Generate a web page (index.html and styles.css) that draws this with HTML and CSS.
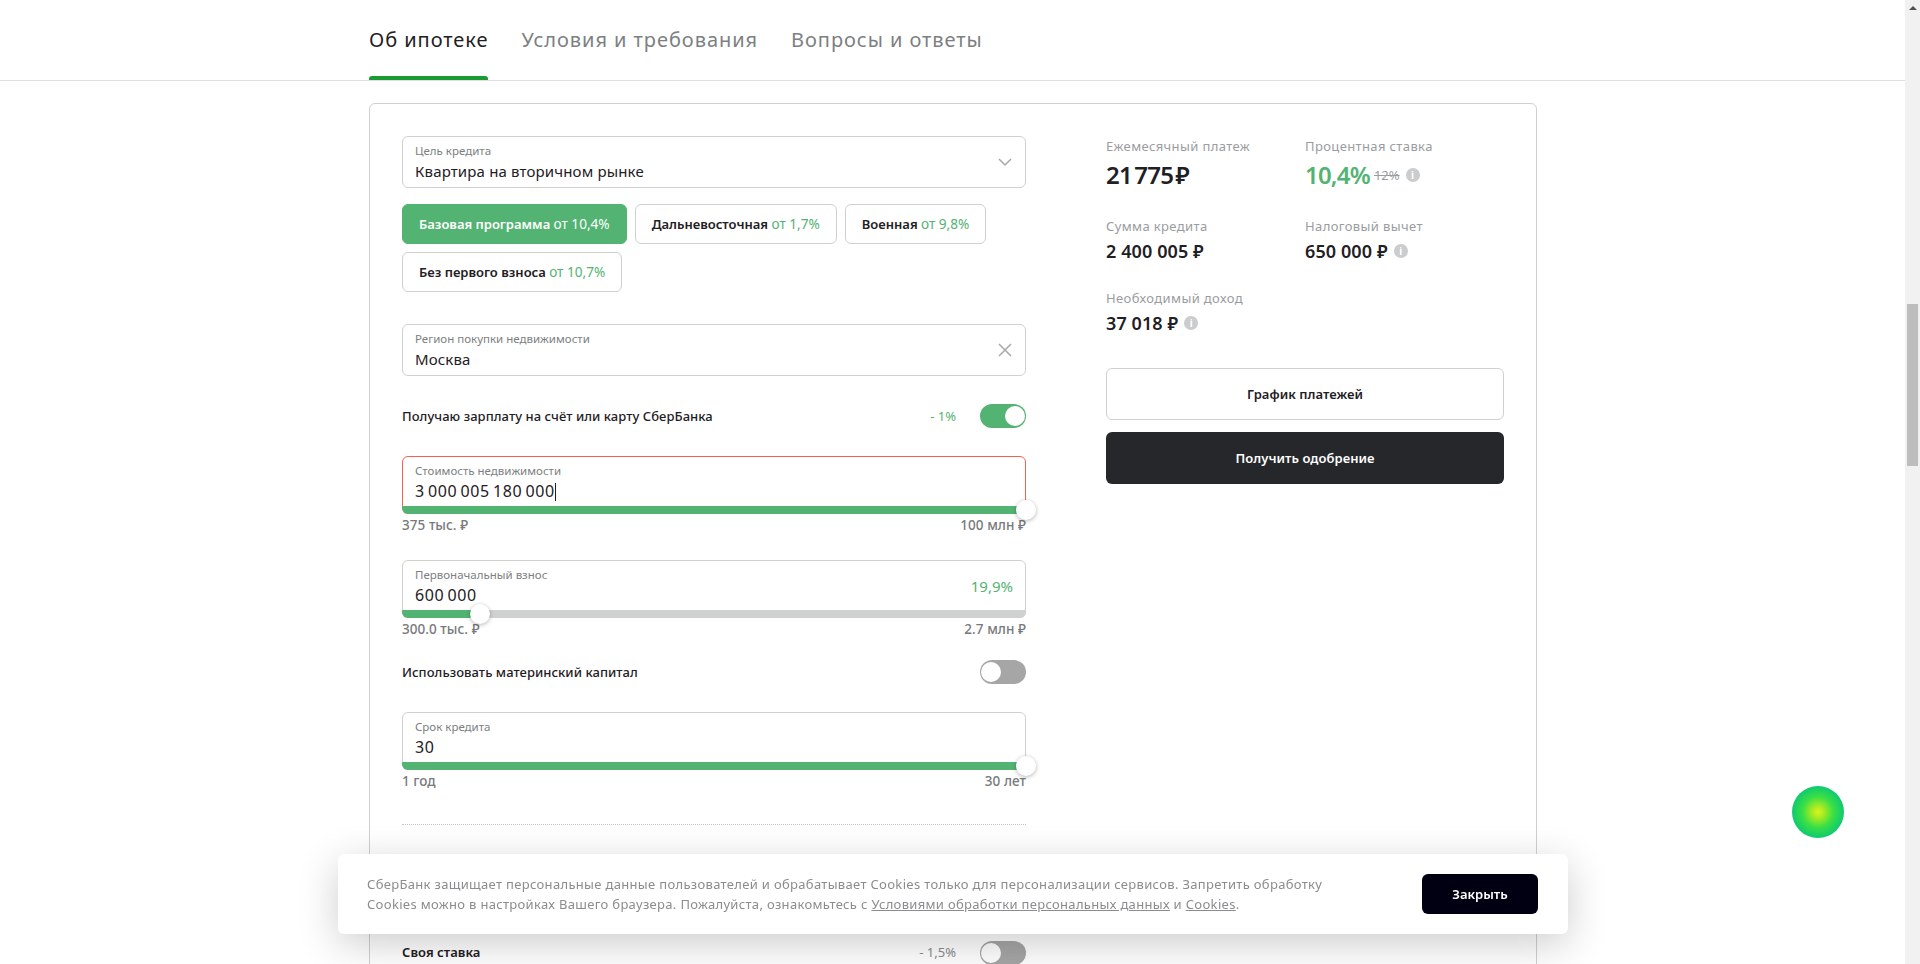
FILE: index.html
```html
<!DOCTYPE html>
<html lang="ru">
<head>
<meta charset="utf-8">
<title>Ипотека</title>
<link rel="stylesheet" href="styles.css">
</head>
<body>
<div class="viewport">
  <main class="page">
    <nav class="tabs">
      <a class="tab active">Об ипотеке</a>
      <a class="tab">Условия и требования</a>
      <a class="tab">Вопросы и ответы</a>
    </nav>
    <section class="card">
      <div class="form">
        <div class="field plain">
          <div class="f-label">Цель кредита</div>
          <div class="f-value">Квартира на вторичном рынке</div>
          <svg class="f-icon" viewBox="0 0 14 14"><path d="M1 4l6 6 6-6" fill="none" stroke="#a8a8a8" stroke-width="1.5"/></svg>
        </div>
        <div class="chips">
          <button class="chip on">Базовая программа <span>от 10,4%</span></button>
          <button class="chip">Дальневосточная <span>от 1,7%</span></button>
          <button class="chip">Военная <span>от 9,8%</span></button>
          <button class="chip">Без первого взноса <span>от 10,7%</span></button>
        </div>
        <div class="field plain region">
          <div class="f-label">Регион покупки недвижимости</div>
          <div class="f-value">Москва</div>
          <svg class="f-icon" viewBox="0 0 14 14"><path d="M1 1l12 12M13 1L1 13" fill="none" stroke="#a8a8a8" stroke-width="1.5"/></svg>
        </div>
        <div class="switch-row first">
          <span class="sw-label">Получаю зарплату на счёт или карту СберБанка</span>
          <span class="sw-note">- 1%</span>
          <span class="toggle on"></span>
        </div>
        <div class="field slider error">
          <div class="f-label">Стоимость недвижимости</div>
          <div class="f-value num">3 000 005 180 000<i class="caret"></i></div>
          <div class="track"><div class="fill full"></div><span class="knob end"></span></div>
        </div>
        <div class="range"><span>375 тыс. ₽</span><span>100 млн ₽</span></div>
        <div class="field slider down">
          <div class="f-label">Первоначальный взнос</div>
          <div class="f-value num">600 000</div>
          <div class="f-percent">19,9%</div>
          <div class="track"><div class="fill part"></div><span class="knob mid"></span></div>
        </div>
        <div class="range"><span>300.0 тыс. ₽</span><span>2.7 млн ₽</span></div>
        <div class="switch-row second">
          <span class="sw-label">Использовать материнский капитал</span>
          <span class="toggle"></span>
        </div>
        <div class="field slider term">
          <div class="f-label">Срок кредита</div>
          <div class="f-value num">30</div>
          <div class="track"><div class="fill full"></div><span class="knob end"></span></div>
        </div>
        <div class="range"><span>1 год</span><span>30 лет</span></div>
        <div class="divider"></div>
        <div class="switch-row own">
          <span class="sw-label strong">Своя ставка</span>
          <span class="sw-note muted">- 1,5%</span>
          <span class="toggle"></span>
        </div>
      </div>
      <aside class="summary">
        <div class="stats">
          <div class="stat s1">
            <div class="s-label">Ежемесячный платеж</div>
            <div class="s-value big">21 775 ₽</div>
          </div>
          <div class="stat s1">
            <div class="s-label">Процентная ставка</div>
            <div class="s-value big green">10,4%<s class="old">12%</s><i class="info">i</i></div>
          </div>
          <div class="stat s2">
            <div class="s-label">Сумма кредита</div>
            <div class="s-value">2 400 005 ₽</div>
          </div>
          <div class="stat s2">
            <div class="s-label">Налоговый вычет</div>
            <div class="s-value">650 000 ₽<i class="info">i</i></div>
          </div>
          <div class="stat s3">
            <div class="s-label">Необходимый доход</div>
            <div class="s-value">37 018 ₽<i class="info">i</i></div>
          </div>
        </div>
        <button class="btn outline">График платежей</button>
        <button class="btn dark">Получить одобрение</button>
      </aside>
    </section>
  </main>
  <div class="scrollbar">
    <svg class="sb-arrow" viewBox="0 0 8 4"><path d="M4 0l4 4H0z" fill="#505050"/></svg>
    <div class="sb-thumb"></div>
  </div>
</div>
<div class="assistant"></div>
<div class="cookie">
  <p class="cookie-text">СберБанк защищает персональные данные пользователей и обрабатывает Cookies только для персонализации сервисов. Запретить обработку<br>Cookies можно в настройках Вашего браузера. Пожалуйста, ознакомьтесь с <a>Условиями обработки персональных данных</a> и <a>Cookies</a>.</p>
  <button class="cookie-btn">Закрыть</button>
</div>
</body>
</html>
```
FILE: styles.css
```css
* { box-sizing: border-box; }
html, body { margin: 0; height: 964px; overflow: hidden; }
body { font-family: "Noto Sans", "Open Sans", sans-serif; color: #1f2024; background: #fff; }
button { font-family: inherit; cursor: pointer; }

.viewport { display: flex; height: 964px; }
.page { width: 1905px; flex: none; overflow: hidden; }

.tabs { height: 81px; border-bottom: 1px solid #e0e0e0; padding-left: 369px; display: flex; gap: 33px; }
.tab { height: 80px; line-height: 79px; font-size: 20px; letter-spacing: .95px; color: #7d7f82; position: relative; }
.tab.active { color: #1f2024; }
.tab.active::after { content: ""; position: absolute; left: 0; right: 0; bottom: 0; height: 4px; background: #1a9a32; border-radius: 3px 3px 0 0; }

.card { width: 1168px; margin: 22px 0 0 369px; border: 1px solid #d0d0d0; border-radius: 6px; padding: 32px; display: flex; gap: 80px; height: 1000px; }
.form { width: 624px; flex: none; }
.summary { width: 398px; flex: none; }

.field { position: relative; border: 1px solid #d0d0d0; border-radius: 6px; padding: 6px 12px 0; }
.field.plain { height: 52px; }
.field.slider { height: 58px; }
.field.error { border-color: #f4624f; }
.f-label { font-size: 11.5px; line-height: 15px; color: #7d7f82; }
.f-value { font-size: 15px; line-height: 22px; margin-top: 2px; letter-spacing: .15px; color: #1f2024; }
.f-value.num { font-size: 16px; letter-spacing: .6px; word-spacing: -1.5px; }
.f-icon { position: absolute; right: 13px; top: 18px; width: 14px; height: 14px; }
.f-percent { position: absolute; right: 12px; top: 14px; font-size: 15px; line-height: 22px; color: #52b372; }
.caret { display: inline-block; width: 1px; height: 18px; background: #1f2024; vertical-align: -4px; }

.chips { display: flex; flex-wrap: wrap; gap: 8px; margin-top: 16px; }
.chip { height: 40px; padding: 0 16px 2px 16px; background: #fff; border: 1px solid #d0d0d0; border-radius: 6px; font-size: 13px; font-weight: 600; color: #1f2024; white-space: nowrap; }
.chip span { font-weight: 400; font-size: 13.6px; color: #52b372; }
.chip.on { background: #52b372; border-color: #52b372; color: #fff; }
.chip.on span { color: #fff; }

.region { margin-top: 32px; }

.switch-row { display: flex; align-items: center; height: 24px; font-size: 13px; }
.switch-row.first { margin-top: 28px; }
.switch-row.second { margin-top: 22px; }
.switch-row.own { margin-top: 116px; }
.sw-label { flex: 1; font-weight: 500; letter-spacing: .05px; }
.sw-label.strong { font-weight: 600; padding-bottom: 3px; }
.sw-note { margin-right: 24px; padding-bottom: 1px; color: #52b372; }
.sw-note.muted { color: #8a8c8f; padding-bottom: 3px; }
.toggle { width: 46px; height: 24px; flex: none; border-radius: 12px; background: #a6a6a6; position: relative; }
.toggle.on { background: #52b372; }
.toggle::after { content: ""; position: absolute; top: 2px; left: 1px; width: 20px; height: 20px; border-radius: 50%; background: #fff; }
.toggle.on::after { left: auto; right: 1px; }

.switch-row.first + .field { margin-top: 28px; }
.field.down { margin-top: 26px; }
.field.term { margin-top: 28px; }

.track { position: absolute; left: -1px; right: -1px; bottom: -1px; height: 8px; background: #d0d2d1; border-radius: 0 0 6px 6px; }
.fill { height: 8px; background: #52b372; border-radius: 0 0 0 6px; }
.fill.full { width: 100%; border-radius: 0 0 6px 6px; }
.fill.part { width: 78px; }
.knob { position: absolute; top: -6px; width: 20px; height: 20px; border-radius: 50%; background: #fff; box-shadow: 0 1px 4px rgba(0,0,0,.3); }
.knob.end { right: -10px; }
.knob.mid { left: 68px; }

.range { display: flex; justify-content: space-between; margin-top: 2px; font-size: 13.5px; line-height: 18px; font-weight: 500; letter-spacing: .05px; color: #77797c; }

.divider { margin-top: 34px; border-top: 1px dotted #c4c4c4; }

.stats { display: grid; grid-template-columns: 199px 199px; }
.stat { height: 72px; }
.stat.s1 { height: 80px; }
.stat.s3 { height: 64px; }
.s-label { font-size: 13px; line-height: 18px; letter-spacing: .38px; color: #9a9c9f; margin-top: 1px; }
.s-value { font-size: 18px; line-height: 24px; font-weight: 600; display: flex; align-items: center; margin-top: 4px; white-space: pre; letter-spacing: .1px; }
.s-value.big { font-size: 24px; line-height: 32px; margin-top: 4px; word-spacing: -3px; letter-spacing: -.8px; }
.green { color: #52b372; }
.old { font-size: 13px; font-weight: 400; color: #9a9c9f; margin-left: 4px; letter-spacing: 0; }
.info { width: 14px; height: 14px; margin-left: 6px; border-radius: 50%; background: #cbcccd; color: #fff; font: 700 10px/14px "Noto Sans", sans-serif; text-align: center; letter-spacing: 0; }

.btn { display: block; width: 398px; font-size: 13px; font-weight: 600; letter-spacing: .05px; border-radius: 6px; }
.btn.outline { height: 52px; margin-top: 16px; background: #fff; border: 1px solid #d0d0d0; color: #1f2024; }
.btn.dark { height: 52px; margin-top: 12px; background: #26272b; border: 0; color: #fff; }

.scrollbar { width: 15px; flex: none; background: #f1f1f1; position: relative; padding: 6px 0 0; }
.sb-arrow { display: block; width: 8px; height: 4px; margin: 0 auto; }
.sb-thumb { position: absolute; left: 2px; right: 2px; top: 304px; height: 162px; background: #bdbdbd; }

.assistant { position: fixed; left: 1792px; top: 786px; width: 52px; height: 52px; border-radius: 50%; background: radial-gradient(circle at 50% 50%, #dcf41c 0, #a0ea24 18%, #3adf45 42%, #12cc6c 68%, #11b0a0 92%, #1a9ab8 100%); }

.cookie { position: fixed; left: 338px; top: 854px; width: 1230px; height: 80px; background: #fff; border-radius: 6px; box-shadow: 0 10px 40px rgba(0,0,0,.2); display: flex; align-items: center; justify-content: space-between; padding: 0 30px 0 29px; }
.cookie-text { margin: 0; font-size: 13px; line-height: 20px; letter-spacing: .32px; color: #8b8c8e; white-space: nowrap; }
.cookie-text a { text-decoration: underline; }
.cookie-btn { width: 116px; height: 40px; background: #000012; border: 0; border-radius: 6px; color: #fff; font-size: 13px; font-weight: 600; }
```
